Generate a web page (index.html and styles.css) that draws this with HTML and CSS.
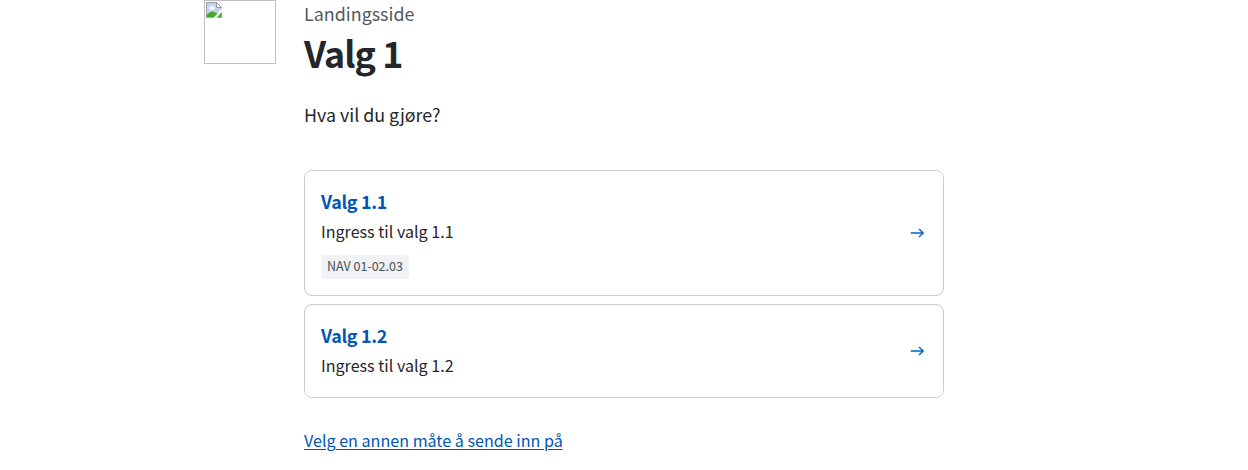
FILE: index.html
```html
<!DOCTYPE html>
<html lang="nb">
<head>
<meta charset="utf-8">
<title>Valg 1</title>
<link rel="stylesheet" href="styles.css">
</head>
<body>
<main class="page">
  <div class="picture">
    <svg width="16" height="16" viewBox="0 0 16 16" aria-hidden="true">
      <path d="M.5.5h10l5 5v10H.5z" fill="#c3d5f5" stroke="#a0a0a0"/>
      <path d="M3 6.500a1.500 1.500 0 0 1 1.600-1.600 2 2 0 0 1 3.600.4A1.300 1.300 0 0 1 8 7.500H3.500z" fill="#fff"/>
      <path d="M1 15v-2.500Q5.500 7.500 10 11h5v4z" fill="#45a82c"/>
      <path d="M10.500.5v5h5z" fill="#fff" stroke="#999"/>
      <path d="M16 6v3.500L10.500 16H7.500l3.500-4z" fill="#fff"/>
    </svg>
  </div>
  <div class="content">
    <p class="eyebrow">Landingsside</p>
    <h1 class="title">Valg 1</h1>
    <p class="question">Hva vil du gjøre?</p>
    <nav class="cards">
      <a class="card" href="#">
        <div class="card-body">
          <h2 class="card-title">Valg 1.1</h2>
          <p class="card-text">Ingress til valg 1.1</p>
          <span class="tag">NAV 01-02.03</span>
        </div>
        <svg class="arrow" width="20" height="20" viewBox="0 0 20 20" aria-hidden="true"><path d="M3.700 10H16.200M12 5.900 16.200 10 12 14.100"/></svg>
      </a>
      <a class="card" href="#">
        <div class="card-body">
          <h2 class="card-title">Valg 1.2</h2>
          <p class="card-text">Ingress til valg 1.2</p>
        </div>
        <svg class="arrow" width="20" height="20" viewBox="0 0 20 20" aria-hidden="true"><path d="M3.700 10H16.200M12 5.900 16.200 10 12 14.100"/></svg>
      </a>
    </nav>
    <a class="link" href="#">Velg en annen måte å sende inn på</a>
  </div>
</main>
</body>
</html>
```
FILE: styles.css
```css
* { box-sizing: border-box; }
body {
  margin: 0;
  background: #fff;
  color: #23262a;
  font-family: "Noto Sans CJK SC", "Noto Sans", sans-serif;
}
h1, h2, p { margin: 0; }
.page {
  display: flex;
  gap: 28px;
  width: 740px;
  margin-left: 204px;
}
.picture {
  flex: none;
  width: 72px;
  height: 64px;
  border: 1px solid #c0c0c0;
  padding: 1px;
}
.picture svg { display: block; }
.content { width: 640px; }
.eyebrow { font-size: 17.9px; line-height: 26px; color: #525962; }
.title {
  font-size: 35.8px;
  line-height: 52px;
  font-weight: 600;
  letter-spacing: -0.9px;
}
.question { margin-top: 22px; font-size: 17.85px; line-height: 28px; }
.cards {
  display: flex;
  flex-direction: column;
  gap: 8px;
  margin-top: 42px;
}
.card {
  display: flex;
  align-items: center;
  justify-content: space-between;
  padding: 16px;
  border: 1px solid #c9cad2;
  border-radius: 8px;
  color: inherit;
  text-decoration: none;
}
.card:first-child { height: 126px; }
.card:last-child { height: 94px; }
.card-body { align-self: flex-start; }
.card-title {
  font-size: 17.9px;
  line-height: 28px;
  font-weight: 600;
  letter-spacing: -0.3px;
  color: #0056b4;
}
.card-text { margin-top: 2px; font-size: 16.1px; line-height: 28px; }
.tag {
  display: block;
  width: 88px;
  height: 24px;
  margin-top: 10px;
  padding: 0 6px;
  border-radius: 3px;
  background: #f1f2f4;
  color: #525962;
  font-size: 12.5px;
  line-height: 22px;
  white-space: nowrap;
  -webkit-text-stroke: 0.1px #525962;
}
.arrow {
  flex: none;
  fill: none;
  stroke: #0063c1;
  stroke-width: 1.4;
}
.link {
  display: inline-block;
  margin-top: 28px;
  color: #0056b4;
  font-size: 16.12px;
  line-height: 28px;
  text-decoration-thickness: 1px;
  text-underline-offset: 2px;
}
```
